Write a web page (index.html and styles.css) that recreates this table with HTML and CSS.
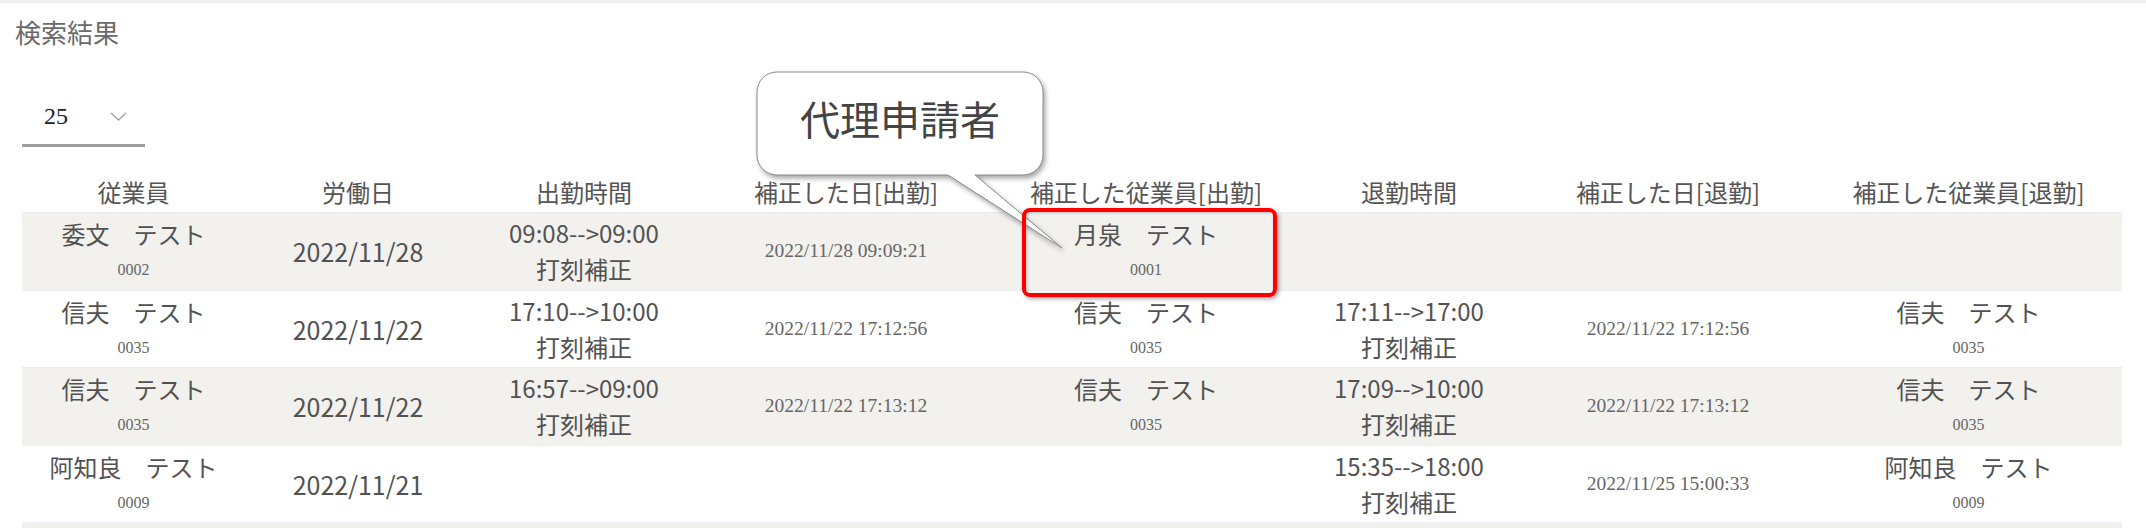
FILE: index.html
```html
<!DOCTYPE html>
<html lang="ja">
<head>
<meta charset="utf-8">
<title>検索結果</title>
<link rel="stylesheet" href="styles.css">
</head>
<body>
<div class="page">
  <div class="topbar"></div>
  <h1 class="title">検索結果</h1>
  <div class="select">
    <span class="select-value">25</span>
    <svg class="chevron" width="17" height="9" viewBox="0 0 17 9"><polyline points="1,1 8.5,8 16,1" fill="none" stroke="#a3a3a3" stroke-width="1.3"/></svg>
  </div>
  <table class="results">
    <colgroup>
      <col class="c1"><col class="c2"><col class="c3"><col class="c4"><col class="c5"><col class="c6"><col class="c7"><col class="c8">
    </colgroup>
    <thead>
      <tr>
        <th>従業員</th><th>労働日</th><th>出勤時間</th><th>補正した日[出勤]</th><th>補正した従業員[出勤]</th><th>退勤時間</th><th>補正した日[退勤]</th><th>補正した従業員[退勤]</th>
      </tr>
    </thead>
    <tbody>
      <tr class="odd">
        <td><div class="name">委文　テスト</div><div class="code">0002</div></td>
        <td class="date">2022/11/28</td>
        <td><div class="line">09:08-->09:00</div><div class="line">打刻補正</div></td>
        <td class="stamp">2022/11/28 09:09:21</td>
        <td><div class="name">月泉　テスト</div><div class="code">0001</div></td>
        <td></td>
        <td></td>
        <td></td>
      </tr>
      <tr>
        <td><div class="name">信夫　テスト</div><div class="code">0035</div></td>
        <td class="date">2022/11/22</td>
        <td><div class="line">17:10-->10:00</div><div class="line">打刻補正</div></td>
        <td class="stamp">2022/11/22 17:12:56</td>
        <td><div class="name">信夫　テスト</div><div class="code">0035</div></td>
        <td><div class="line">17:11-->17:00</div><div class="line">打刻補正</div></td>
        <td class="stamp">2022/11/22 17:12:56</td>
        <td><div class="name">信夫　テスト</div><div class="code">0035</div></td>
      </tr>
      <tr class="odd">
        <td><div class="name">信夫　テスト</div><div class="code">0035</div></td>
        <td class="date">2022/11/22</td>
        <td><div class="line">16:57-->09:00</div><div class="line">打刻補正</div></td>
        <td class="stamp">2022/11/22 17:13:12</td>
        <td><div class="name">信夫　テスト</div><div class="code">0035</div></td>
        <td><div class="line">17:09-->10:00</div><div class="line">打刻補正</div></td>
        <td class="stamp">2022/11/22 17:13:12</td>
        <td><div class="name">信夫　テスト</div><div class="code">0035</div></td>
      </tr>
      <tr>
        <td><div class="name">阿知良　テスト</div><div class="code">0009</div></td>
        <td class="date">2022/11/21</td>
        <td></td>
        <td></td>
        <td></td>
        <td><div class="line">15:35-->18:00</div><div class="line">打刻補正</div></td>
        <td class="stamp">2022/11/25 15:00:33</td>
        <td><div class="name">阿知良　テスト</div><div class="code">0009</div></td>
      </tr>
      <tr class="odd">
        <td></td><td></td><td></td><td></td><td></td><td></td><td></td><td></td>
      </tr>
    </tbody>
  </table>

  <div class="callout">
    <svg class="callout-shape" width="330" height="195" viewBox="0 0 330 195">
      <path d="M27,7 H273 A20,20 0 0 1 293,27 V90 A20,20 0 0 1 273,110 H225 L312,183 L198,110 H27 A20,20 0 0 1 7,90 V27 A20,20 0 0 1 27,7 Z" fill="#ffffff" stroke="#8c8c8c" stroke-width="1"/>
    </svg>
    <div class="callout-text">代理申請者</div>
  </div>
  <div class="highlight"></div>
</div>
</body>
</html>
```

FILE: styles.css
```css
html, body {
  margin: 0;
  padding: 0;
  background: #ffffff;
}

body {
  font-family: "Noto Sans CJK JP", "Noto Sans", sans-serif;
  color: #545454;
}

.page {
  position: relative;
  width: 2146px;
  min-height: 528px;
}

.topbar {
  height: 3px;
  background: #f0f0f0;
}

.title {
  margin: 12px 0 0 15px;
  font-size: 26px;
  line-height: 34px;
  font-weight: 400;
  color: #6a6a6a;
}

.select {
  display: flex;
  align-items: center;
  justify-content: space-between;
  box-sizing: border-box;
  width: 123px;
  margin: 41px 0 0 22px;
  padding: 12px 18px 14px 22px;
  border-bottom: 3px solid #9e9e9e;
}

.select-value {
  font-family: "Liberation Serif", serif;
  font-size: 24px;
  line-height: 28px;
  color: #222222;
}

.chevron {
  display: block;
}

.results {
  margin: 25px 0 0 22px;
  width: 2100px;
  table-layout: fixed;
  border-collapse: collapse;
  border-spacing: 0;
}

.c1 { width: 223px; }
.c2 { width: 226px; }
.c3 { width: 226px; }
.c4 { width: 298px; }
.c5 { width: 302px; }
.c6 { width: 224px; }
.c7 { width: 294px; }
.c8 { width: 307px; }

.results th {
  height: 40px;
  padding: 0;
  font-size: 24px;
  line-height: 32px;
  font-weight: 400;
  color: #555555;
  text-align: center;
  vertical-align: middle;
  white-space: nowrap;
}

.results td {
  height: 76.5px;
  padding: 0;
  border-top: 1px solid #e8ecf2;
  text-align: center;
  vertical-align: middle;
  white-space: nowrap;
}

.results tr.odd td {
  background: #f2f1ee;
}

.name {
  font-size: 24px;
  line-height: 38px;
  color: #525252;
}

.code {
  font-family: "Liberation Serif", serif;
  font-size: 16px;
  line-height: 34px;
  color: #666666;
}

.line {
  font-size: 24px;
  line-height: 36px;
  color: #525252;
}

.date {
  font-size: 25px;
  color: #525252;
}

.stamp {
  font-family: "Liberation Serif", serif;
  font-size: 19.5px;
  color: #666666;
}

.callout {
  position: absolute;
  left: 750px;
  top: 65px;
  width: 330px;
  height: 195px;
}

.callout-shape {
  position: absolute;
  left: 0;
  top: 0;
  filter: drop-shadow(2px 3px 2.5px rgba(0, 0, 0, 0.35));
}

.callout-text {
  position: absolute;
  left: 7px;
  top: 29px;
  width: 286px;
  text-align: center;
  font-size: 40px;
  line-height: 48px;
  color: #444444;
}

.highlight {
  position: absolute;
  left: 1022px;
  top: 208px;
  width: 255px;
  height: 89px;
  box-sizing: border-box;
  border: 4px solid #ff0000;
  border-radius: 8px;
  box-shadow: 2px 2px 4px rgba(0, 0, 0, 0.35), inset 1px 1px 3px rgba(0, 0, 0, 0.2);
}
```
